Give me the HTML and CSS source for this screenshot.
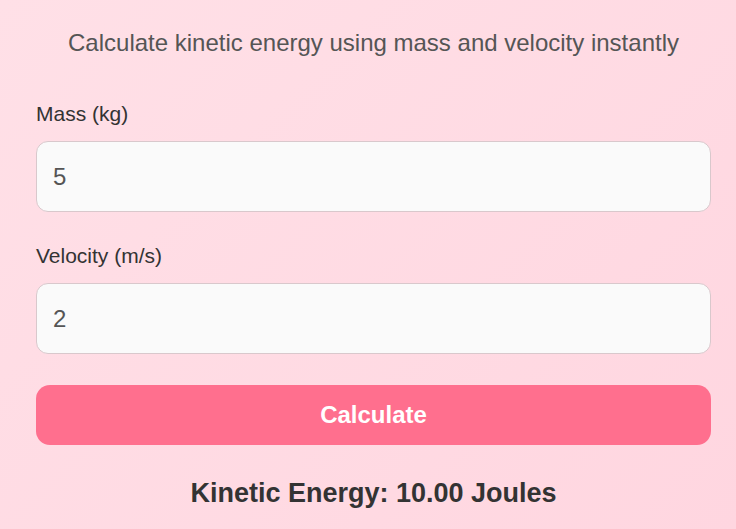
FILE: index.html
```html
<!DOCTYPE html>
<html lang="en">
<head>
  <meta charset="UTF-8">
  <title>Kinetic Energy Calculator</title>
  <link rel="stylesheet" href="styles.css">
</head>
<body>
  <div class="container">
    <p class="subtitle">Calculate kinetic energy using mass and velocity instantly</p>
    <form id="energyForm">
      <label for="mass">Mass (kg)</label>
      <input type="number" id="mass" value="5" required>

      <label for="velocity">Velocity (m/s)</label>
      <input type="number" id="velocity" value="2" required>

      <button type="submit">Calculate</button>
    </form>
    <div class="result" id="result">Kinetic Energy: 10.00 Joules</div>
  </div>

  <script>
    document.getElementById("energyForm").addEventListener("submit", function (e) {
      e.preventDefault();
      const m = parseFloat(document.getElementById("mass").value);
      const v = parseFloat(document.getElementById("velocity").value);
      const ke = 0.5 * m * v * v;
      document.getElementById("result").textContent = "Kinetic Energy: " + ke.toFixed(2) + " Joules";
    });
  </script>
</body>
</html>
```

FILE: styles.css
```css
body {
  margin: 0;
  font-family: "Liberation Sans", Arial, sans-serif;
  background: linear-gradient(135deg, #ffe0e7, #ffd6e0);
  min-height: 100vh;
}

.container {
  padding: 0 25px 0 36px;
}

.subtitle {
  margin: 0;
  padding-top: 29px;
  text-align: center;
  font-size: 24px;
  color: #555;
}

form {
  display: flex;
  flex-direction: column;
  margin-top: 45px;
}

label {
  font-size: 21px;
  color: #333;
  margin-bottom: 15px;
}

input[type="number"] {
  box-sizing: border-box;
  height: 71px;
  padding: 0 16px;
  font-family: inherit;
  font-size: 24px;
  color: #555;
  background: #fafafa;
  border: 1px solid #d9c8cc;
  border-radius: 12px;
  margin-bottom: 32px;
}

input[type="number"]:last-of-type {
  margin-bottom: 31px;
}

button {
  height: 60px;
  font-family: inherit;
  font-size: 24px;
  font-weight: bold;
  color: #fff;
  background: #ff6f8e;
  border: none;
  border-radius: 14px;
  cursor: pointer;
}

.result {
  margin-top: 33px;
  text-align: center;
  font-size: 27px;
  font-weight: bold;
  color: #333;
}
```
